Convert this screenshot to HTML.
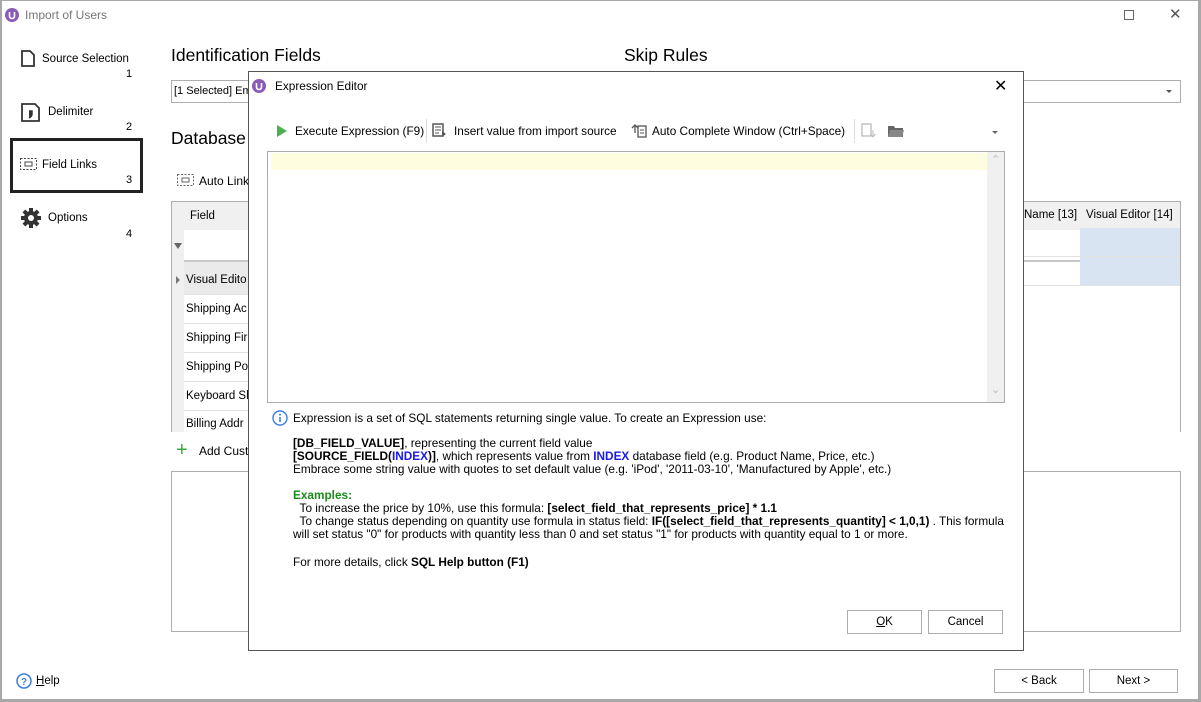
<!DOCTYPE html>
<html><head><meta charset="utf-8"><style>
*{box-sizing:border-box;margin:0;padding:0}
body{width:1201px;height:702px;overflow:hidden;background:#fff;font-family:"Liberation Sans",sans-serif;font-size:12px;color:#000;position:relative}
.a{position:absolute}
.win{left:0;top:0;width:1201px;height:702px;border-left:2px solid #a8a8a8;border-top:1px solid #a8a8a8;border-right:3px solid #a8a8a8;border-bottom:3px solid #a8a8a8}
.t{white-space:nowrap}
.btn{border:1px solid #adadad;background:#fff;text-align:center;line-height:22px;height:24px}
.dlg{font-size:11.8px;letter-spacing:0}
</style></head><body>
<div class="a win"></div>
<svg class="a" style="left:5px;top:8px" width="14" height="14"><circle cx="7" cy="7" r="7" fill="#8a5bb8"/><path d="M4.5 4v4a2.5 2.5 0 0 0 5 0V4" stroke="#fff" stroke-width="1.6" fill="none"/></svg>
<div class="a t" style="left:25px;top:8px;color:#777;font-size:12px">Import of Users</div>
<div class="a" style="left:1124px;top:10px;width:10px;height:10px;border:1px solid #666"></div>
<div class="a t" style="left:1169px;top:5px;font-size:15px;color:#555">✕</div>
<svg class="a" style="left:21px;top:50px" width="14" height="17"><path d="M1 1h8l4 4v11H1z" fill="none" stroke="#333" stroke-width="1.8"/></svg>
<div class="a t" style="left:42px;top:53px;font-size:11.5px">Source Selection</div>
<div class="a" style="left:126px;top:68px;font-size:11px">1</div>
<svg class="a" style="left:21px;top:103px" width="19" height="19"><path d="M1 1h13l4 4v13H1z" fill="none" stroke="#333" stroke-width="1.8"/><path d="M8 8h3v3c0 2-1 3-3 4" fill="#333" stroke="#333" stroke-width="1.5"/></svg>
<div class="a t" style="left:48px;top:106px;font-size:11.5px">Delimiter</div>
<div class="a" style="left:126px;top:121px;font-size:11px">2</div>
<div class="a" style="left:10px;top:138px;width:133px;height:55px;border:3px solid #222"></div>
<svg class="a" style="left:20px;top:158px" width="17" height="12"><rect x="0.5" y="0.5" width="16" height="11" fill="none" stroke="#444" stroke-dasharray="2 1.5"/><rect x="5" y="4" width="7" height="4" fill="none" stroke="#444"/></svg>
<div class="a t" style="left:42px;top:159px;font-size:11.5px">Field Links</div>
<div class="a" style="left:126px;top:174px;font-size:11px">3</div>
<svg class="a" style="left:21px;top:208px" width="20" height="20" viewBox="0 0 20 20"><g fill="#333"><circle cx="10" cy="10" r="7"/><rect x="8" y="0" width="4" height="20"/><rect x="0" y="8" width="20" height="4"/><rect x="8" y="0" width="4" height="20" transform="rotate(45 10 10)"/><rect x="8" y="0" width="4" height="20" transform="rotate(-45 10 10)"/></g><circle cx="10" cy="10" r="3" fill="#fff"/></svg>
<div class="a t" style="left:48px;top:212px;font-size:11.5px">Options</div>
<div class="a" style="left:126px;top:228px;font-size:11px">4</div>
<div class="a t" style="left:171px;top:45px;font-size:17.5px">Identification Fields</div>
<div class="a t" style="left:624px;top:45px;font-size:17.5px">Skip Rules</div>
<div class="a" style="left:171px;top:80px;width:1010px;height:23px;border:1px solid #adadad"></div>
<div class="a t" style="left:174px;top:85px;font-size:11px">[1 Selected] Em</div>
<div class="a" style="left:1166px;top:90px;border-left:3px solid transparent;border-right:3px solid transparent;border-top:3px solid #555"></div>
<div class="a t" style="left:171px;top:128px;font-size:17.5px">Database</div>
<svg class="a" style="left:177px;top:174px" width="17" height="12"><rect x="0.5" y="0.5" width="16" height="11" fill="none" stroke="#666" stroke-dasharray="2 1.5"/><rect x="5" y="4" width="7" height="4" fill="none" stroke="#666"/></svg>
<div class="a t" style="left:199px;top:174px;font-size:12px">Auto Link</div>
<div class="a" style="left:171px;top:201px;width:1010px;height:231px;border:1px solid #adadad;border-bottom:none"></div>
<div class="a" style="left:172px;top:202px;width:1008px;height:28px;background:#f0f0f0"></div>
<div class="a" style="left:172px;top:230px;width:12px;height:202px;background:#f0f0f0"></div>
<div class="a t" style="left:190px;top:210px;font-size:11.5px">Field</div>
<div class="a" style="left:174px;top:243px;border-left:4px solid transparent;border-right:4px solid transparent;border-top:6px solid #666"></div>
<div class="a" style="left:184px;top:260px;width:996px;height:2px;background:#c8c8c8"></div>
<div class="a" style="left:176px;top:276px;border-top:4px solid transparent;border-bottom:4px solid transparent;border-left:4px solid #777"></div>
<div class="a" style="left:184px;top:262px;width:70px;height:32px;background:#eaeaea"></div>
<div class="a t" style="left:186px;top:274px;font-size:11.5px">Visual Edito</div>
<div class="a t" style="left:186px;top:303px;font-size:11.5px">Shipping Ac</div>
<div class="a t" style="left:186px;top:332px;font-size:11.5px">Shipping Fir</div>
<div class="a t" style="left:186px;top:361px;font-size:11.5px">Shipping Po</div>
<div class="a t" style="left:186px;top:390px;font-size:11.5px">Keyboard Sh</div>
<div class="a t" style="left:186px;top:418px;font-size:11.5px;height:13px;overflow:hidden">Billing Addr</div>
<div class="a" style="left:184px;top:294px;width:70px;border-top:1px solid #e0e0e0"></div>
<div class="a" style="left:184px;top:323px;width:70px;border-top:1px solid #e0e0e0"></div>
<div class="a" style="left:184px;top:352px;width:70px;border-top:1px solid #e0e0e0"></div>
<div class="a" style="left:184px;top:381px;width:70px;border-top:1px solid #e0e0e0"></div>
<div class="a" style="left:184px;top:410px;width:70px;border-top:1px solid #e0e0e0"></div>
<div class="a t" style="left:1024px;top:209px;font-size:11.5px">Name [13]</div>
<div class="a t" style="left:1086px;top:209px;font-size:11.5px">Visual Editor [14]</div>
<div class="a" style="left:1080px;top:228px;width:100px;height:57px;background:#d8e4f2"></div>
<div class="a" style="left:1023px;top:256px;width:157px;border-top:1px solid #e2e2e2"></div>
<div class="a" style="left:1023px;top:285px;width:157px;border-top:1px solid #e2e2e2"></div>
<div class="a t" style="left:176px;top:440px;font-size:20px;color:#3aa83a;line-height:20px">+</div>
<div class="a t" style="left:199px;top:444px;font-size:12px">Add Cust</div>
<div class="a" style="left:171px;top:471px;width:1010px;height:161px;border:1px solid #adadad"></div>
<svg class="a" style="left:16px;top:673px" width="16" height="16"><circle cx="8" cy="8" r="7" fill="none" stroke="#3b7ee0" stroke-width="1.5"/><text x="8" y="12" font-size="10" font-weight="bold" fill="#3b7ee0" text-anchor="middle" font-family="Liberation Sans">?</text></svg>
<div class="a t" style="left:36px;top:675px;font-size:11.5px"><u>H</u>elp</div>
<div class="a btn" style="left:994px;top:669px;width:90px;font-size:11.5px">&lt; Back</div>
<div class="a btn" style="left:1089px;top:669px;width:89px;font-size:11.5px">Next &gt;</div>
<div class="a dlg" style="left:248px;top:71px;width:776px;height:580px;background:#fff;border:1px solid #555">
 <svg class="a" style="left:3px;top:7px" width="14" height="14"><circle cx="7" cy="7" r="7" fill="#8a5bb8"/><path d="M4.5 4v4a2.5 2.5 0 0 0 5 0V4" stroke="#fff" stroke-width="1.6" fill="none"/></svg>
 <div class="a t" style="left:26px;top:7px">Expression Editor</div>
 <div class="a t" style="left:745px;top:4px;font-size:16px">✕</div>
 <div class="a" style="left:28px;top:53px;border-top:6px solid transparent;border-bottom:6px solid transparent;border-left:10px solid #4caf50"></div>
 <div class="a t" style="left:46px;top:52px">Execute Expression (F9)</div>
 <div class="a" style="left:177px;top:47px;height:24px;border-left:1px solid #ddd"></div>
 <svg class="a" style="left:183px;top:51px" width="15" height="15"><rect x="1" y="1" width="10" height="12" fill="none" stroke="#555" stroke-width="1.5"/><path d="M3 4h6M3 7h6M3 10h4" stroke="#555"/><path d="M10 8l4 3-4 3z" fill="#555"/></svg>
 <div class="a t" style="left:205px;top:52px">Insert value from import source</div>
 <svg class="a" style="left:382px;top:51px" width="16" height="15"><path d="M1 5l3-3 3 3M4 2v8" stroke="#555" fill="none" stroke-width="1.3"/><rect x="7" y="3" width="8" height="11" fill="none" stroke="#555" stroke-width="1.3"/><path d="M9 7h4M9 10h4" stroke="#555"/></svg>
 <div class="a t" style="left:403px;top:52px">Auto Complete Window (Ctrl+Space)</div>
 <div class="a" style="left:605px;top:47px;height:24px;border-left:1px solid #ddd"></div>
 <svg class="a" style="left:612px;top:51px" width="16" height="16"><rect x="1" y="1" width="9" height="12" fill="none" stroke="#bbb" stroke-width="1.3"/><path d="M12 7v6M9.5 11l2.5 3 2.5-3" stroke="#bbb" fill="none"/></svg>
 <svg class="a" style="left:638px;top:52px" width="18" height="14"><path d="M1 2h6l1 2h8v9H1z" fill="#666"/><path d="M3 6h14l-2 7H1z" fill="#888"/></svg>
 <div class="a" style="left:743px;top:59px;border-left:3px solid transparent;border-right:3px solid transparent;border-top:3px solid #666"></div>
 <div class="a" style="left:18px;top:79px;width:738px;height:252px;border:1px solid #ababab"></div>
 <div class="a" style="left:22px;top:81px;width:716px;height:17px;background:#fffde0"></div>
 <div class="a" style="left:738px;top:80px;width:17px;height:250px;background:#f0f0f0"></div>
 <div class="a t" style="left:742px;top:81px;color:#bbb;font-size:11px">&#8963;</div>
 <div class="a t" style="left:742px;top:311px;color:#bbb;font-size:11px">&#8964;</div>
 <svg class="a" style="left:23px;top:338px" width="16" height="16"><circle cx="8" cy="8" r="7" fill="none" stroke="#3b7ee0" stroke-width="1.4"/><rect x="7.2" y="7" width="1.6" height="5" fill="#3b7ee0"/><circle cx="8" cy="4.6" r="1" fill="#3b7ee0"/></svg>
 <div class="a t" style="left:44px;top:339px">Expression is a set of SQL statements returning single value. To create an Expression use:</div>
 <div class="a t" style="left:44px;top:365px;line-height:13px"><b>[DB_FIELD_VALUE]</b>, representing the current field value<br><b>[SOURCE_FIELD(<span style="color:#1a1ae6">INDEX</span>)]</b>, which represents value from <b style="color:#1a1ae6">INDEX</b> database field (e.g. Product Name, Price, etc.)<br>Embrace some string value with quotes to set default value (e.g. 'iPod', '2011-03-10', 'Manufactured by Apple', etc.)</div>
 <div class="a t" style="left:44px;top:417px;line-height:13px"><b style="color:#1a8a1a">Examples:</b><br>&nbsp;&nbsp;To increase the price by 10%, use this formula: <b>[select_field_that_represents_price] * 1.1</b><br>&nbsp;&nbsp;To change status depending on quantity use formula in status field: <b>IF([select_field_that_represents_quantity] &lt; 1,0,1)</b> . This formula<br>will set status "0" for products with quantity less than 0 and set status "1" for products with quantity equal to 1 or more.</div>
 <div class="a t" style="left:44px;top:483px">For more details, click <b>SQL Help button (F1)</b></div>
 <div class="a btn" style="left:598px;top:538px;width:75px;font-size:11.5px"><u>O</u>K</div>
 <div class="a btn" style="left:679px;top:538px;width:75px;font-size:11.5px">Cancel</div>
</div>
</body></html>
